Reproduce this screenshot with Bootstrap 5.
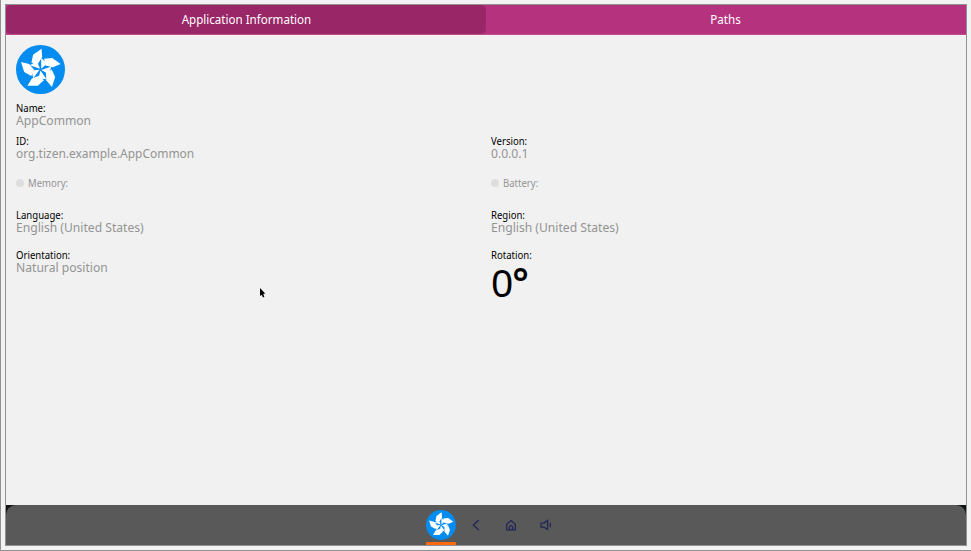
<!DOCTYPE html>
<html lang="en">
<head>
<meta charset="utf-8">
<meta name="viewport" content="width=device-width, initial-scale=1">
<title>Application Information</title>
<link href="https://cdn.jsdelivr.net/npm/bootstrap@5.3.0/dist/css/bootstrap.min.css" rel="stylesheet">
<style>
body{height:551px;background:#f2f2f2;border-left:1px solid #919191;border-bottom:1px solid #919191;padding:4px 4px 4px 4px;font-family:"Noto Sans","Open Sans",sans-serif;color:#000;overflow:hidden}
.screen{height:542px;width:962px;border:1px solid #919191;background:#f1f1f1}
.tabs{height:30px;background:#b5337e;border-bottom:1px solid #c24c8e}
.tabs .nav-link{width:480px;height:29px;padding:0;line-height:29px;font-size:12.6px;color:#fff;border-radius:5px}
.tabs .nav-link>span,.lbl>span,.val>span,.dim{display:inline-block;transform:scaleX(.92);transform-origin:0 50%}
.tabs .nav-link>span{transform-origin:50% 50%}
.tabs .nav-link.active{background:#992667}
.content{height:470px;padding:10px 0 0 10px}
.logo{width:49px;height:49px;display:block}
.cell{width:475px}
.lbl{font-size:10.4px;line-height:12px;color:#000}
.val{font-size:13px;line-height:12px;color:#949494}
.val>span{transform:scaleX(.932)}
.val.tight>span{transform:scaleX(.92)}
.big{font-size:39px;line-height:40px;margin-top:1px;letter-spacing:-1px}
.big b{font-weight:600}
.dot{width:8px;height:8px;background:#dedede;margin-right:4px}
.dim{font-size:10.4px;line-height:12px;color:#949494}
.r1{margin-top:8px}.r2{margin-top:9px}.r3{margin-top:18px}.r4{margin-top:20px}.r5{margin-top:16px}
.dock{height:40px;background:#111414}
.dock-bar{height:40px;background:#595959;border-radius:10px 10px 0 0;padding-left:420px}
.app{width:30px;height:40px;padding-top:5px}
.app .logo{width:30px;height:30px}
.app-line{height:3px;margin-top:2px;background:#ff6a0f;border-radius:1px 1px 0 0}
.dock svg.ico{width:12px;height:12px;fill:none;stroke:#1f2659;stroke-width:1.25}
.back{margin-left:14px}.home,.sound{margin-left:23px}
.pointer{position:absolute;left:259px;top:288px;width:7px;height:10px}
</style>
</head>
<body>
<svg class="d-none">
  <symbol id="wheel" viewBox="-73 -73 146 146">
    <circle r="73" fill="#058cf0"/>
    <g fill="#fff">
      <g id="blade"><path d="M3-62L-22-44L-27-20L-7-18L5-37Z"/><path d="M2-34L20-18L2-2Z"/></g>
      <use href="#blade" transform="rotate(72)"/><use href="#blade" transform="rotate(144)"/>
      <use href="#blade" transform="rotate(216)"/><use href="#blade" transform="rotate(288)"/>
    </g>
  </symbol>
</svg>
<div class="screen">
  <nav class="nav tabs text-center flex-nowrap">
    <a class="nav-link active" href="#"><span>Application Information</span></a>
    <a class="nav-link" href="#"><span>Paths</span></a>
  </nav>
  <main class="content">
    <svg class="logo"><use href="#wheel"/></svg>
    <div class="r1"><div class="lbl"><span>Name:</span></div><div class="val"><span>AppCommon</span></div></div>
    <div class="d-flex r2">
      <div class="cell"><div class="lbl"><span>ID:</span></div><div class="val tight"><span>org.tizen.example.AppCommon</span></div></div>
      <div class="cell"><div class="lbl"><span>Version:</span></div><div class="val"><span>0.0.0.1</span></div></div>
    </div>
    <div class="d-flex r3">
      <div class="cell d-flex align-items-center"><span class="dot rounded-circle"></span><span class="dim">Memory:</span></div>
      <div class="cell d-flex align-items-center"><span class="dot rounded-circle"></span><span class="dim">Battery:</span></div>
    </div>
    <div class="d-flex r4">
      <div class="cell"><div class="lbl"><span>Language:</span></div><div class="val"><span>English (United States)</span></div></div>
      <div class="cell"><div class="lbl"><span>Region:</span></div><div class="val"><span>English (United States)</span></div></div>
    </div>
    <div class="d-flex r5">
      <div class="cell"><div class="lbl"><span>Orientation:</span></div><div class="val"><span>Natural position</span></div></div>
      <div class="cell"><div class="lbl"><span>Rotation:</span></div><div class="big">0<b>°</b></div></div>
    </div>
  </main>
  <footer class="dock">
    <div class="dock-bar d-flex align-items-center">
      <div class="app"><svg class="logo"><use href="#wheel"/></svg><div class="app-line"></div></div>
      <svg class="ico back" viewBox="0 0 12 12"><path d="M8.8 1L3.3 6L8.8 11"/></svg>
      <svg class="ico home" viewBox="0 0 12 12"><path d="M1.7 5.2L6 1.6L10.3 5.2V10.8H1.7ZM4.4 10.8V7.6Q6 5.8 7.6 7.6V10.8"/></svg>
      <svg class="ico sound" viewBox="0 0 12 12"><path d="M1 4H3.8L7.6 1.5V10.5L3.8 8H1ZM9.8 3.8Q11.2 6 9.8 8.2"/></svg>
    </div>
  </footer>
</div>
<svg class="pointer" viewBox="0 0 7 10"><path d="M1 0V8L2.7 6.8L4 9.5L5.4 8.8L4.2 6L6.2 5.6Z" fill="#000"/></svg>
<script src="https://cdn.jsdelivr.net/npm/bootstrap@5.3.0/dist/js/bootstrap.bundle.min.js"></script>
</body>
</html>
